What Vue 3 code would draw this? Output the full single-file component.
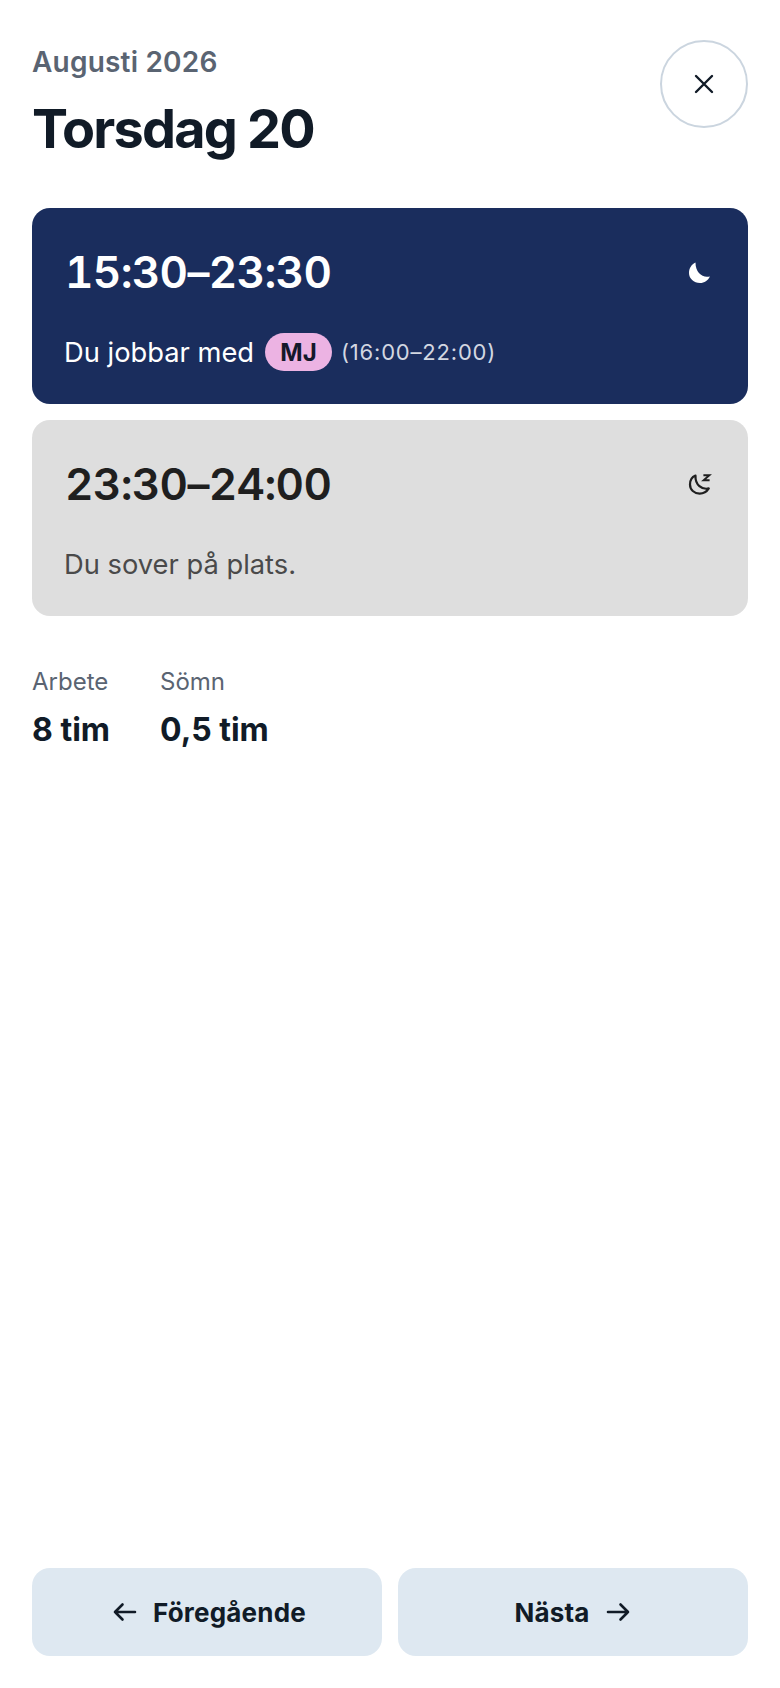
<template>
  <div class="page">
    <header class="top">
      <div>
        <div class="month">Augusti 2026</div>
        <h1 class="day">Torsdag 20</h1>
      </div>
      <button class="close" aria-label="Stäng">
        <svg width="24" height="24" viewBox="0 0 24 24" fill="none" stroke="#111b27" stroke-width="2.4" stroke-linecap="round">
          <path d="M4 4l16 16M20 4L4 20" />
        </svg>
      </button>
    </header>

    <section class="shifts">
      <div class="shift work">
        <div class="shift-top">
          <span class="time">15:30–23:30</span>
          <svg class="icon" width="24" height="24" viewBox="0 0 24 24" fill="#fff">
            <path d="M7.5 2.6C3.6 4.4 1 8.4 1 13 1 18.6 5.8 23 12 23 16.4 23 20 20.2 22 16.4 15 18.6 7.4 13 7.5 2.6Z" />
          </svg>
        </div>
        <div class="shift-note">
          <span>Du jobbar med</span>
          <span class="badge">MJ</span>
          <span class="range">(16:00–22:00)</span>
        </div>
      </div>

      <div class="shift sleep">
        <div class="shift-top">
          <span class="time">23:30–24:00</span>
          <svg class="icon" width="24" height="24" viewBox="0 0 24 24" fill="none" stroke="#1f1f1f">
            <path stroke-width="2.2" stroke-linejoin="round" d="M7.5 3.6C4 5 2 8.8 2 12.6 2 17.8 6.2 21.6 11.6 21.6 15.4 21.6 18.8 19.6 20.8 16.4 14 18 7 13 7.5 3.6Z" />
            <path stroke-width="1.9" stroke-linejoin="miter" d="M15.4 3.2H21.4L15.6 8.2H21.6" />
          </svg>
        </div>
        <div class="shift-note">Du sover på plats.</div>
      </div>
    </section>

    <section class="totals">
      <div v-for="t in totals" :key="t.label" class="total">
        <div class="total-label">{{ t.label }}</div>
        <div class="total-value">{{ t.value }}</div>
      </div>
    </section>

    <footer class="nav">
      <button class="nav-btn prev">
        <svg width="24" height="24" viewBox="0 0 24 24" fill="none" stroke="#111b27" stroke-width="2.6" stroke-linecap="round" stroke-linejoin="round">
          <path d="M22 12H2M9.5 4.5L2 12l7.5 7.5" />
        </svg>
        <span>Föregående</span>
      </button>
      <button class="nav-btn next">
        <span>Nästa</span>
        <svg width="24" height="24" viewBox="0 0 24 24" fill="none" stroke="#111b27" stroke-width="2.6" stroke-linecap="round" stroke-linejoin="round">
          <path d="M2 12h20M14.5 4.5L22 12l-7.5 7.5" />
        </svg>
      </button>
    </footer>
  </div>
</template>

<script setup>
const totals = [
  { label: "Arbete", value: "8 tim" },
  { label: "Sömn", value: "0,5 tim" },
];
</script>

<style scoped>
.page {
  box-sizing: border-box;
  min-height: 1688px;
  padding: 40px 32px 32px;
  display: flex;
  flex-direction: column;
  font-family: Inter, "Noto Sans", sans-serif;
  color: #111b27;
  background: #fff;
}

.top {
  display: flex;
  justify-content: space-between;
  align-items: flex-start;
}
.month {
  font-size: 28px;
  line-height: 44px;
  font-weight: 600;
  letter-spacing: 0.2px;
  color: #5a6472;
}
.day {
  margin: 13px 0 0;
  font-size: 54px;
  line-height: 64px;
  font-weight: 700;
  letter-spacing: -1.8px;
}
.close {
  width: 88px;
  height: 88px;
  border-radius: 50%;
  border: 2px solid #cbd5df;
  background: #fff;
  padding: 0;
  display: flex;
  align-items: center;
  justify-content: center;
}

.shifts {
  margin-top: 47px;
  display: flex;
  flex-direction: column;
  gap: 16px;
}
.shift {
  height: 196px;
  box-sizing: border-box;
  border-radius: 18px;
  padding: 32px 32px 0;
}
.work {
  background: #1a2d5d;
  color: #fff;
}
.sleep {
  background: #dedede;
  color: #1f1f1f;
}
.shift-top {
  display: flex;
  justify-content: space-between;
  align-items: center;
  height: 64px;
}
.time {
  font-size: 44px;
  line-height: 64px;
  font-weight: 600;
  font-variant-numeric: tabular-nums;
  letter-spacing: -0.65px;
  margin-left: 1px;
}
.icon {
  margin-right: 4px;
}
.shift-note {
  margin-top: 28px;
  display: flex;
  align-items: center;
  height: 40px;
  font-size: 27.3px;
}
.sleep .shift-note {
  color: #4a4a4a;
}
.badge {
  margin-left: 11px;
  width: 67px;
  height: 38px;
  border-radius: 19px;
  background: #ecb3e3;
  color: #14182b;
  font-size: 24px;
  font-weight: 700;
  display: flex;
  align-items: center;
  justify-content: center;
}
.range {
  margin-left: 9px;
  font-size: 22px;
  letter-spacing: 0.8px;
  color: #d3d7e1;
}

.totals {
  margin-top: 48px;
  display: flex;
  gap: 48px;
}
.total {
  min-width: 80px;
}
.total-label {
  font-size: 24px;
  line-height: 36px;
  color: #5a6472;
}
.total-value {
  margin-top: 8px;
  font-size: 32px;
  line-height: 44px;
  font-weight: 700;
}

.nav {
  margin-top: auto;
  display: grid;
  grid-template-columns: 1fr 1fr;
  gap: 16px;
}
.nav-btn {
  height: 88px;
  border: 0;
  border-radius: 18px;
  background: #dee8f1;
  color: #111b27;
  font-family: inherit;
  font-size: 26px;
  font-weight: 700;
  letter-spacing: 0.2px;
  display: flex;
  align-items: center;
  justify-content: center;
  gap: 16px;
}
.prev {
  padding: 0 0 0 5px;
}
.next {
  padding: 0 2px 0 0;
}
</style>
